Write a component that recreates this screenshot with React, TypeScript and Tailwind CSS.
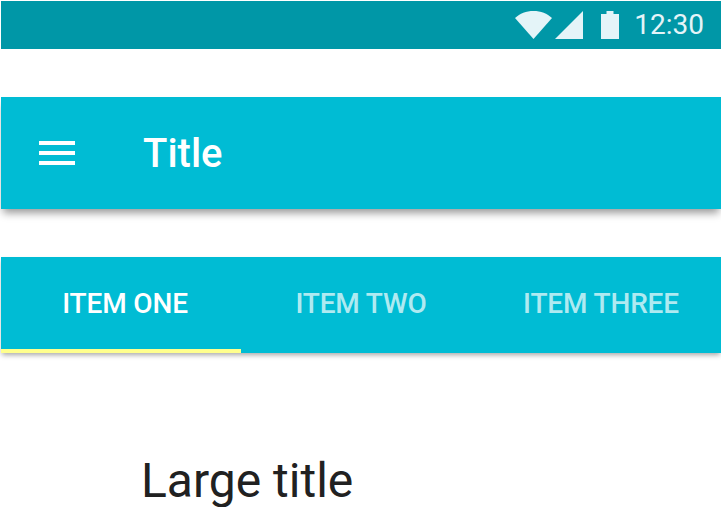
const font = "font-['Roboto',sans-serif]";

function StatusIcons() {
  return (
    <div className="flex items-center">
      <svg width="37" height="28" viewBox="0 0 37 28" className="block">
        <path d="M0 7 C5 2.6 11 0 18.5 0 C26 0 32 2.6 37 7 L18.5 28 Z" fill="#e4f4f8" />
      </svg>
      <svg width="28" height="28" viewBox="0 0 28 28" className="ml-[3px] block">
        <path d="M0 28 L28 0 L28 28 Z" fill="#e4f4f8" />
      </svg>
      <svg width="18" height="28" viewBox="0 0 18 28" className="ml-[18px] block">
        <path d="M0 3 H5.5 V0 H12.5 V3 H18 V28 H0 Z" fill="#e4f4f8" />
      </svg>
    </div>
  );
}

function Tab({ label, active, width }: { label: string; active?: boolean; width: string }) {
  return (
    <div className={`relative flex h-full items-center justify-center pb-[2px] ${active ? "pl-2" : ""} ${width}`}>
      <span className={`text-[28px] leading-8 font-medium tracking-[-0.15px] ${active ? "text-white" : "text-white/70"}`}>{label}</span>
      {active ? <div className="absolute inset-x-0 bottom-0 h-1 bg-[#ffff8d]" /> : null}
    </div>
  );
}

export default function App() {
  return (
    <div className={`h-[507px] w-[721px] overflow-hidden bg-white pt-px pl-px ${font}`}>
      <div className="flex h-12 items-center justify-end bg-[#0097a7] pr-[17px]">
        <StatusIcons />
        <span className="ml-[15px] text-[28px] leading-none text-[#e4f4f8]">12:30</span>
      </div>

      <div className="mt-12 flex h-28 items-center bg-[#00bcd4] shadow-[0_6px_8px_-2px_rgba(0,0,0,0.4)]">
        <div className="ml-[38px] flex w-9 flex-col gap-[6px]">
          <div className="h-1 bg-white" />
          <div className="h-1 bg-white" />
          <div className="h-1 bg-white" />
        </div>
        <span className="mt-[2px] ml-[68px] text-[40px] font-medium text-white">Title</span>
      </div>

      <div className="mt-12 flex h-24 bg-[#00bcd4] shadow-[0_3px_5px_-1px_rgba(0,0,0,0.35)]">
        <Tab label="ITEM ONE" active width="w-60" />
        <Tab label="ITEM TWO" width="w-60" />
        <Tab label="ITEM THREE" width="w-60" />
      </div>

      <p className="mt-[104px] ml-[140px] text-[48px] leading-[48px] text-[#212121]">Large title</p>
    </div>
  );
}
